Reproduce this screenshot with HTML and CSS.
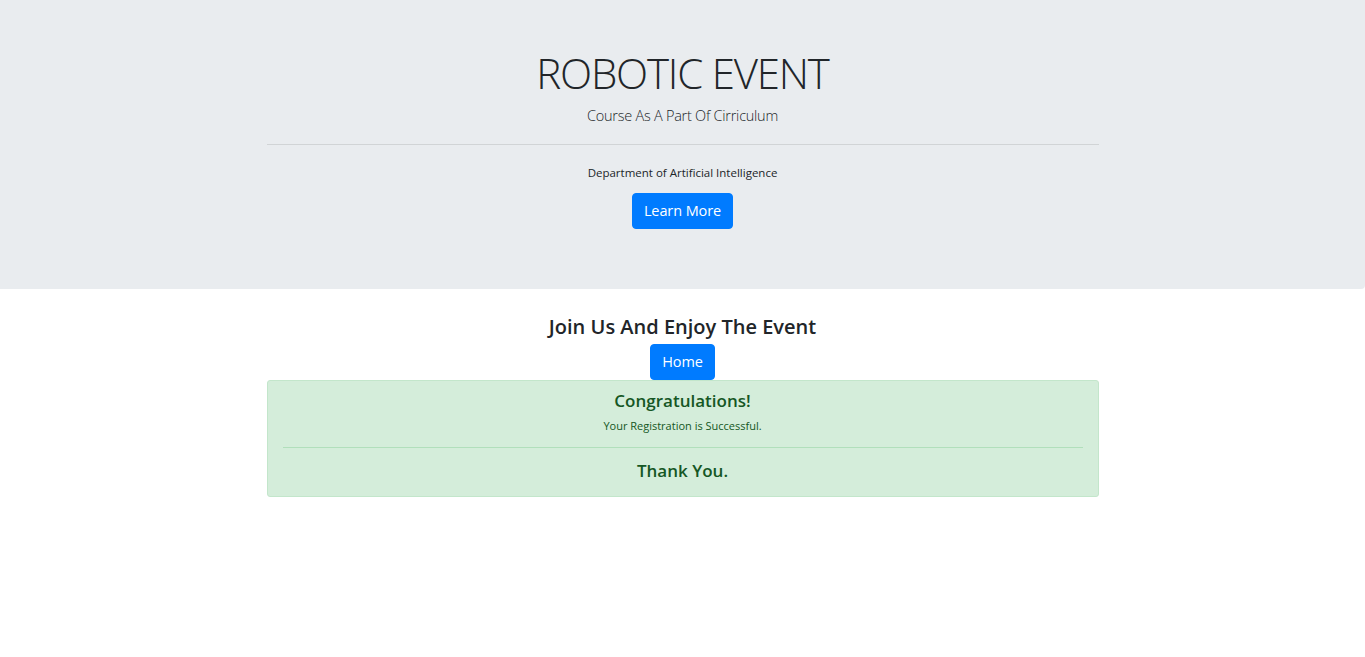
FILE: index.html
```html
<!DOCTYPE html>
<html lang="en">
<head>
<meta charset="utf-8">
<title>Robotic Event</title>
<link rel="stylesheet" href="styles.css">
</head>
<body>
  <header class="jumbotron">
    <div class="container">
      <h1 class="display">ROBOTIC EVENT</h1>
      <p class="lead">Course As A Part Of Cirriculum</p>
      <hr class="rule">
      <p class="dept">Department of Artificial Intelligence</p>
      <p class="lead"><a class="btn" href="#">Learn More</a></p>
    </div>
  </header>
  <main class="container">
    <h3 class="join">Join Us And Enjoy The Event</h3>
    <a class="btn" href="#">Home</a>
    <div class="alert">
      <h4 class="alert-heading">Congratulations!</h4>
      <p class="alert-text">Your Registration is Successful.</p>
      <hr class="alert-rule">
      <h4 class="alert-heading last">Thank You.</h4>
    </div>
  </main>
</body>
</html>
```
FILE: styles.css
```css
* { box-sizing: border-box; }
html, body { margin: 0; padding: 0; }
body {
  font-family: "Open Sans", "Noto Sans", sans-serif;
  font-size: 12px;
  line-height: 1.5;
  color: #212529;
  background: #fff;
  text-align: center;
}
.container {
  width: 832px;
  margin: 0 auto;
}
.jumbotron {
  background: #e9ecef;
  padding: 48px 0;
  border-radius: 0 0 4px 0;
  margin-bottom: 25px;
}
.display {
  font-size: 42px;
  font-weight: 300;
  line-height: 49px;
  margin: 0 0 8px;
  letter-spacing: -1.2px;
}
.lead {
  font-size: 14.5px;
  font-weight: 300;
  line-height: 22.5px;
  margin: 0 0 12px;
  letter-spacing: -0.25px;
}
.rule {
  border: 0;
  border-top: 1px solid rgba(0,0,0,.1);
  margin: 16px 0 19px;
  height: 0;
}
.dept {
  margin: 0 0 11px;
  line-height: 18px;
  font-size: 11.5px;
}
.btn {
  display: inline-block;
  vertical-align: middle;
  background: #007bff;
  color: #fff;
  text-decoration: none;
  font-size: 14.5px;
  font-weight: 400;
  line-height: 22px;
  padding: 6px 11px;
  border: 1px solid #007bff;
  border-radius: 4px;
  letter-spacing: -0.1px;
}
.join {
  font-size: 20px;
  font-weight: 600;
  line-height: 25px;
  margin: 0 0 5px;
}
.alert {
  background: #d4edda;
  border: 1px solid #c3e6cb;
  color: #155724;
  border-radius: 3px;
  padding: 9px 15px;
  margin-bottom: 12px;
}
.alert-heading {
  font-size: 17px;
  font-weight: 600;
  line-height: 21.6px;
  margin: 0 0 6px;
}
.alert-heading.last { margin-bottom: 5px; }
.alert-text {
  font-size: 11px;
  line-height: 18px;
  margin: 0 0 12px;
}
.alert-rule {
  border: 0;
  border-top: 1px solid #b1dfbb;
  margin: 0 0 12px;
  height: 0;
}
```
